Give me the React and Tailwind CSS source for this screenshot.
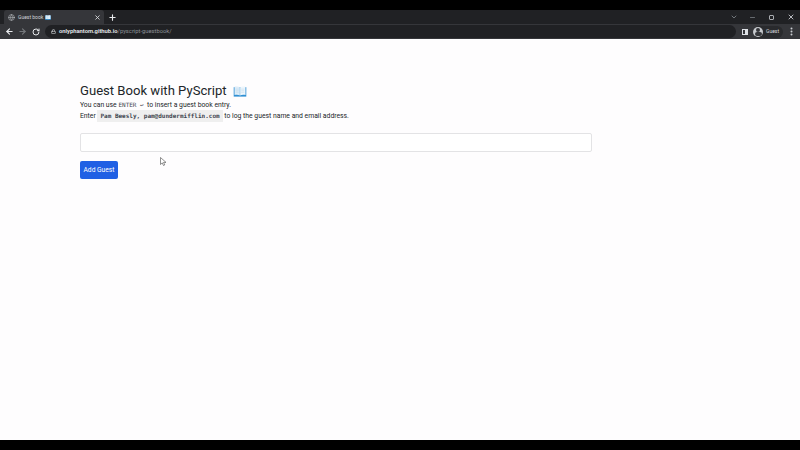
import React from "react";
import { ArrowLeft, ArrowRight, RotateCw, Lock, X, Plus, ChevronDown, Minus, Globe } from "lucide-react";

function Book({ className }) {
  return (
    <svg viewBox="0 0 16 14" className={className}>
      <path d="M0 1.500h16v12H0z" fill="#2f8fd3" />
      <path d="M1 1c2.500-.5 5-.5 6.800.6V12C6 11 3.500 11 1 11.500z" fill="#dcecf8" />
      <path d="M15 1c-2.500-.5-5-.5-6.800.6V12C10 11 12.500 11 15 11.500z" fill="#eef6fc" />
      <path d="M2.500 4h4M2.500 6h4M2.500 8h4M9.500 4h4M9.500 6h4M9.500 8h4" stroke="#b9d7ea" strokeWidth=".6" />
    </svg>
  );
}

function Chrome() {
  return (
    <div className="h-[29px] shrink-0 flex flex-col bg-[#202124] text-[#dee1e6]">
      <div className="h-[14px] flex items-end justify-between pl-[4px]">
        <div className="flex items-center gap-[4px] h-full">
          <div className="w-[100px] h-full bg-[#35363a] rounded-t-[3px] flex items-center pl-[4px] pr-[3px] gap-[3px]">
            <Globe size={7} className="text-[#b5b8bc]" />
            <span className="text-[5px] leading-none text-[#cfd2d6] flex items-center gap-[2px]">Guest book <Book className="w-[6px] h-[5px]" /></span>
            <X size={7} strokeWidth={3} className="ml-auto text-[#d8dade]" />
          </div>
          <Plus size={9} strokeWidth={3} className="text-[#e8eaed]" />
        </div>
        <div className="flex items-center h-full">
          <div className="w-[19px] flex justify-center"><ChevronDown size={8} className="text-[#9aa0a6]" /></div>
          <div className="w-[19px] flex justify-center"><Minus size={7} strokeWidth={2} className="text-[#9aa0a6]" /></div>
          <div className="w-[19px] flex justify-center"><div className="w-[5px] h-[5px] border border-[#a9acb0] rounded-[1px]" /></div>
          <div className="w-[19px] flex justify-center"><X size={8} strokeWidth={2.500} className="text-[#d8dade]" /></div>
        </div>
      </div>
      <div className="h-[15px] bg-[#35363a] flex items-center pl-[5px] pr-[4px]">
        <ArrowLeft size={9} strokeWidth={3} className="text-[#e8eaed]" />
        <ArrowRight size={9} strokeWidth={3} className="ml-[4px] text-[#74777b]" />
        <RotateCw size={8} strokeWidth={3} className="ml-[5px] text-[#e8eaed]" />
        <div className="flex-1 h-[13px] ml-[5px] bg-[#202124] rounded-full flex items-center pl-[6px] gap-[3px] text-[5.800px]">
          <Lock size={5} strokeWidth={3} className="text-[#d0d3d7]" />
          <span className="leading-none whitespace-nowrap"><span className="text-[#e8eaed] font-semibold">onlyphantom.github.io</span><span className="text-[#8b8f94]">/pyscript-guestbook/</span></span>
        </div>
        <div className="w-[6px] h-[6px] ml-[6px] border border-[#dee1e6] border-r-[3px]" />
        <div className="h-[12px] w-[30px] ml-[5px] rounded-full bg-[#292a2d] flex items-center gap-[3px]">
          <div className="w-[10px] h-[10px] rounded-full bg-[#c6c9cd] flex flex-col items-center overflow-hidden">
            <div className="w-[4px] h-[4px] mt-[1px] rounded-full bg-[#35363a]" />
            <div className="w-[7px] h-[4px] mt-[0.5px] rounded-full bg-[#35363a]" />
          </div>
          <span className="text-[5px] leading-none text-[#d8dade]">Guest</span>
        </div>
        <svg viewBox="0 0 9 9" className="w-[9px] h-[9px] ml-[4px] text-[#c9ccd0]">
          <circle cx="4.500" cy="1.500" r="1" fill="currentColor" />
          <circle cx="4.500" cy="4.500" r="1" fill="currentColor" />
          <circle cx="4.500" cy="7.500" r="1" fill="currentColor" />
        </svg>
      </div>
    </div>
  );
}

export default function App() {
  return (
    <div className="w-[800px] h-[450px] overflow-hidden bg-black flex flex-col font-['Roboto','Noto_Sans',sans-serif]">
      <div className="h-[10px] shrink-0" />
      <Chrome />
      <main className="relative h-[401px] shrink-0 bg-[#fefdfe] pl-[80px] pt-[43px]">
        <h1 className="text-[13.100px] leading-[18px] text-[#212529] flex items-center gap-[6px]">
          Guest Book with PyScript <Book className="w-[14px] h-[11px] mt-[1px]" />
        </h1>
        <p className="text-[6.800px] leading-[10px] text-[#212529] whitespace-nowrap flex items-center">
          You can use&nbsp;<code className="font-['DejaVu_Sans_Mono',monospace] text-[6px] text-[#3f4650]">ENTER ↩</code>&nbsp; to insert a guest book entry.
        </p>
        <p className="text-[6.800px] leading-[11px] text-[#212529] whitespace-nowrap flex items-center">
          Enter&nbsp;<code className="font-['DejaVu_Sans_Mono',monospace] font-semibold text-[6px] leading-[12px] px-[3px] bg-[#efefef] text-[#3f4650]">Pam Beesly, pam@dundermifflin.com</code>&nbsp;to log the guest name and email address.
        </p>
        <div className="w-[512px] h-[19px] mt-[11px] bg-white border border-[#e3e3e5] rounded-[2px]" />
        <button className="block mt-[9px] w-[38px] h-[18px] pt-[1px] rounded-[2px] bg-[#2060e4] text-white text-[6.700px] leading-none text-center">Add Guest</button>
        <svg viewBox="0 0 12 18" className="absolute left-[160px] top-[118px] w-[6px] h-[9px]">
          <path d="M1 1v14l3.500-3.200 2.500 5.200 2.500-1.200-2.500-5h5z" fill="#fff" stroke="#555" strokeWidth="1.300" />
        </svg>
      </main>
    </div>
  );
}
